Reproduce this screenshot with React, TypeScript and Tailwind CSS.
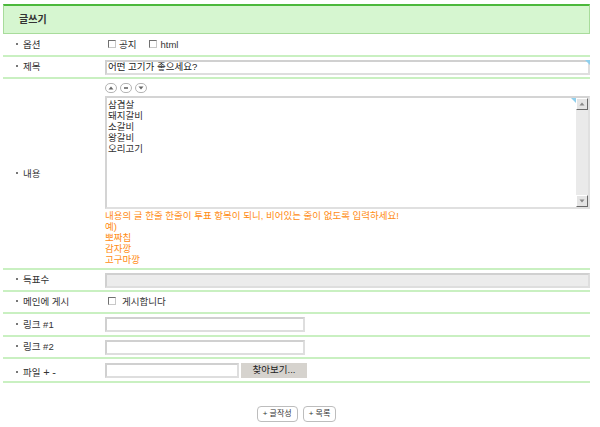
import type { ReactNode } from "react";

const font = "font-['Liberation_Sans','Noto_Sans_CJK_KR',sans-serif]";

function Label({ children }: { children: ReactNode }) {
  return (
    <div className="w-[102px] shrink-0 flex items-center pl-[13px] text-[#333]">
      <span className="w-[2px] h-[2px] bg-[#777] mr-[5px] -mt-[2px]" />
      <span>{children}</span>
    </div>
  );
}

function Row({ children, h, center = true }: { children: ReactNode; h: string; center?: boolean }) {
  return (
    <div className={`flex ${center ? "items-center" : "items-stretch"} border-b-2 border-[#c9f0c1] ${h}`}>
      {children}
    </div>
  );
}

function Check() {
  return (
    <span className="inline-block w-[8px] h-[8px] bg-white border border-t-[#707070] border-l-[#707070] border-r-[#c8c8c8] border-b-[#c8c8c8]" />
  );
}

function Corner() {
  return (
    <span className="absolute top-0 right-0 w-0 h-0 border-t-[5px] border-t-[#8fd0ee] border-l-[5px] border-l-transparent" />
  );
}

function Input({ w, value, disabled }: { w: string; value?: string; disabled?: boolean }) {
  return (
    <div
      className={`relative h-[15px] ${w} border-2 border-[#dedede] border-t-[#d0d0d0] border-l-[#d0d0d0] ${
        disabled ? "bg-[#ececec]" : "bg-white"
      } flex items-center pl-[1px] text-[#222]`}
    >
      {value}
    </div>
  );
}

function MiniBtn({ kind }: { kind: "up" | "mid" | "down" }) {
  return (
    <span className="w-[12px] h-[10px] rounded-[5px] border border-[#b4b4b4] bg-white flex items-center justify-center">
      <svg width="6" height="4" viewBox="0 0 6 4">
        {kind === "up" && <polygon points="3,0.5 5.5,3.5 0.5,3.5" fill="#666" />}
        {kind === "mid" && <rect x="1" y="1.2" width="4" height="1.6" fill="#666" />}
        {kind === "down" && <polygon points="0.5,0.5 5.5,0.5 3,3.5" fill="#666" />}
      </svg>
    </span>
  );
}

function ScrollArrow({ up }: { up?: boolean }) {
  return (
    <div className="h-[12px] bg-[#e4e4e4] border border-t-white border-l-white border-r-[#6a6a6a] border-b-[#6a6a6a] flex items-center justify-center">
      <svg width="6" height="4" viewBox="0 0 6 4">
        {up ? <polygon points="3,0.5 5.5,3.5 0.5,3.5" fill="#888" /> : <polygon points="0.5,0.5 5.5,0.5 3,3.5" fill="#888" />}
      </svg>
    </div>
  );
}

export default function App() {
  const items = ["삼겹살", "돼지갈비", "소갈비", "왕갈비", "오리고기"];
  return (
    <div className={`w-[600px] h-[427px] bg-white ${font} text-[9.5px] leading-none`}>
      <div className="w-[587px] ml-[3px] pt-[4px]">
        <div className="h-[30px] bg-[#d6f6d0] border-t-2 border-t-[#4cb83c] border-x border-b border-[#a8dc9b] flex items-center pl-[15px] text-[10px] font-bold text-[#333]">
          글쓰기
        </div>

        <Row h="h-[23px]">
          <Label>옵션</Label>
          <div className="flex items-center text-[#333]">
            <span className="ml-[3px]"><Check /></span>
            <span className="ml-[3px]">공지</span>
            <span className="ml-[13px]"><Check /></span>
            <span className="ml-[3px] text-[9.5px]">html</span>
          </div>
        </Row>

        <Row h="h-[22px]">
          <Label>제목</Label>
          <div className="relative flex-1">
            <Input w="w-full" value="어떤 고기가 좋으세요?" />
            <Corner />
          </div>
        </Row>

        <Row h="h-[191px]">
          <Label>내용</Label>
          <div className="flex-1 self-start flex flex-col pt-[4px]">
            <div className="flex gap-[3px] h-[10px]">
              <MiniBtn kind="up" />
              <MiniBtn kind="mid" />
              <MiniBtn kind="down" />
            </div>
            <div className="relative mt-[3px] h-[113px] border-2 border-[#e0e0e0] border-t-[#d4d4d4] border-l-[#d4d4d4] bg-white flex">
              <div className="flex-1 pl-[1px] pt-[1px] text-[#333] leading-[11px]">
                {items.map((t) => (
                  <div key={t}>{t}</div>
                ))}
              </div>
              <span className="absolute top-0 right-[12px] w-0 h-0 border-t-[5px] border-t-[#8fd0ee] border-l-[5px] border-l-transparent" />
              <div className="w-[12px] bg-[#eaeaea] flex flex-col justify-between">
                <ScrollArrow up />
                <ScrollArrow />
              </div>
            </div>
            <div className="mt-[1px] text-[#ff8c14] leading-[11px]">
              <div>내용의 글 한줄 한줄이 투표 항목이 되니, 비어있는 줄이 없도록 입력하세요!</div>
              <div>예)</div>
              <div>뽀짜칩</div>
              <div>감자깡</div>
              <div>고구마깡</div>
            </div>
          </div>
        </Row>

        <Row h="h-[22px]">
          <Label>득표수</Label>
          <div className="flex-1">
            <Input w="w-full" disabled />
          </div>
        </Row>

        <Row h="h-[22px]">
          <Label>메인에 게시</Label>
          <div className="flex items-center text-[#333]">
            <span className="ml-[3px]"><Check /></span>
            <span className="ml-[6px]">게시합니다</span>
          </div>
        </Row>

        <Row h="h-[23px]">
          <Label>링크 #1</Label>
          <Input w="w-[200px]" />
        </Row>

        <Row h="h-[22px]">
          <Label>링크 #2</Label>
          <Input w="w-[200px]" />
        </Row>

        <Row h="h-[24px]">
          <div className="self-stretch flex items-end pb-[3px]">
            <Label>
              파일 <span className="text-[11px]">+</span> <span className="text-[11px]">-</span>
            </Label>
          </div>
          <div className="flex items-center gap-[2px]">
            <Input w="w-[134px]" />
            <div className="h-[15px] w-[66px] bg-[#d6d3ce] flex items-center justify-center text-[#222]">
              찾아보기...
            </div>
          </div>
        </Row>

        <div className="mt-[23px] flex justify-center gap-[5px] text-[8px] text-[#333]">
          <div className="h-[16px] px-[5px] rounded-[4px] border border-[#bdbdbd] bg-white flex items-center">+ 글작성</div>
          <div className="h-[16px] px-[5px] rounded-[4px] border border-[#bdbdbd] bg-white flex items-center">+ 목록</div>
        </div>
      </div>
    </div>
  );
}
